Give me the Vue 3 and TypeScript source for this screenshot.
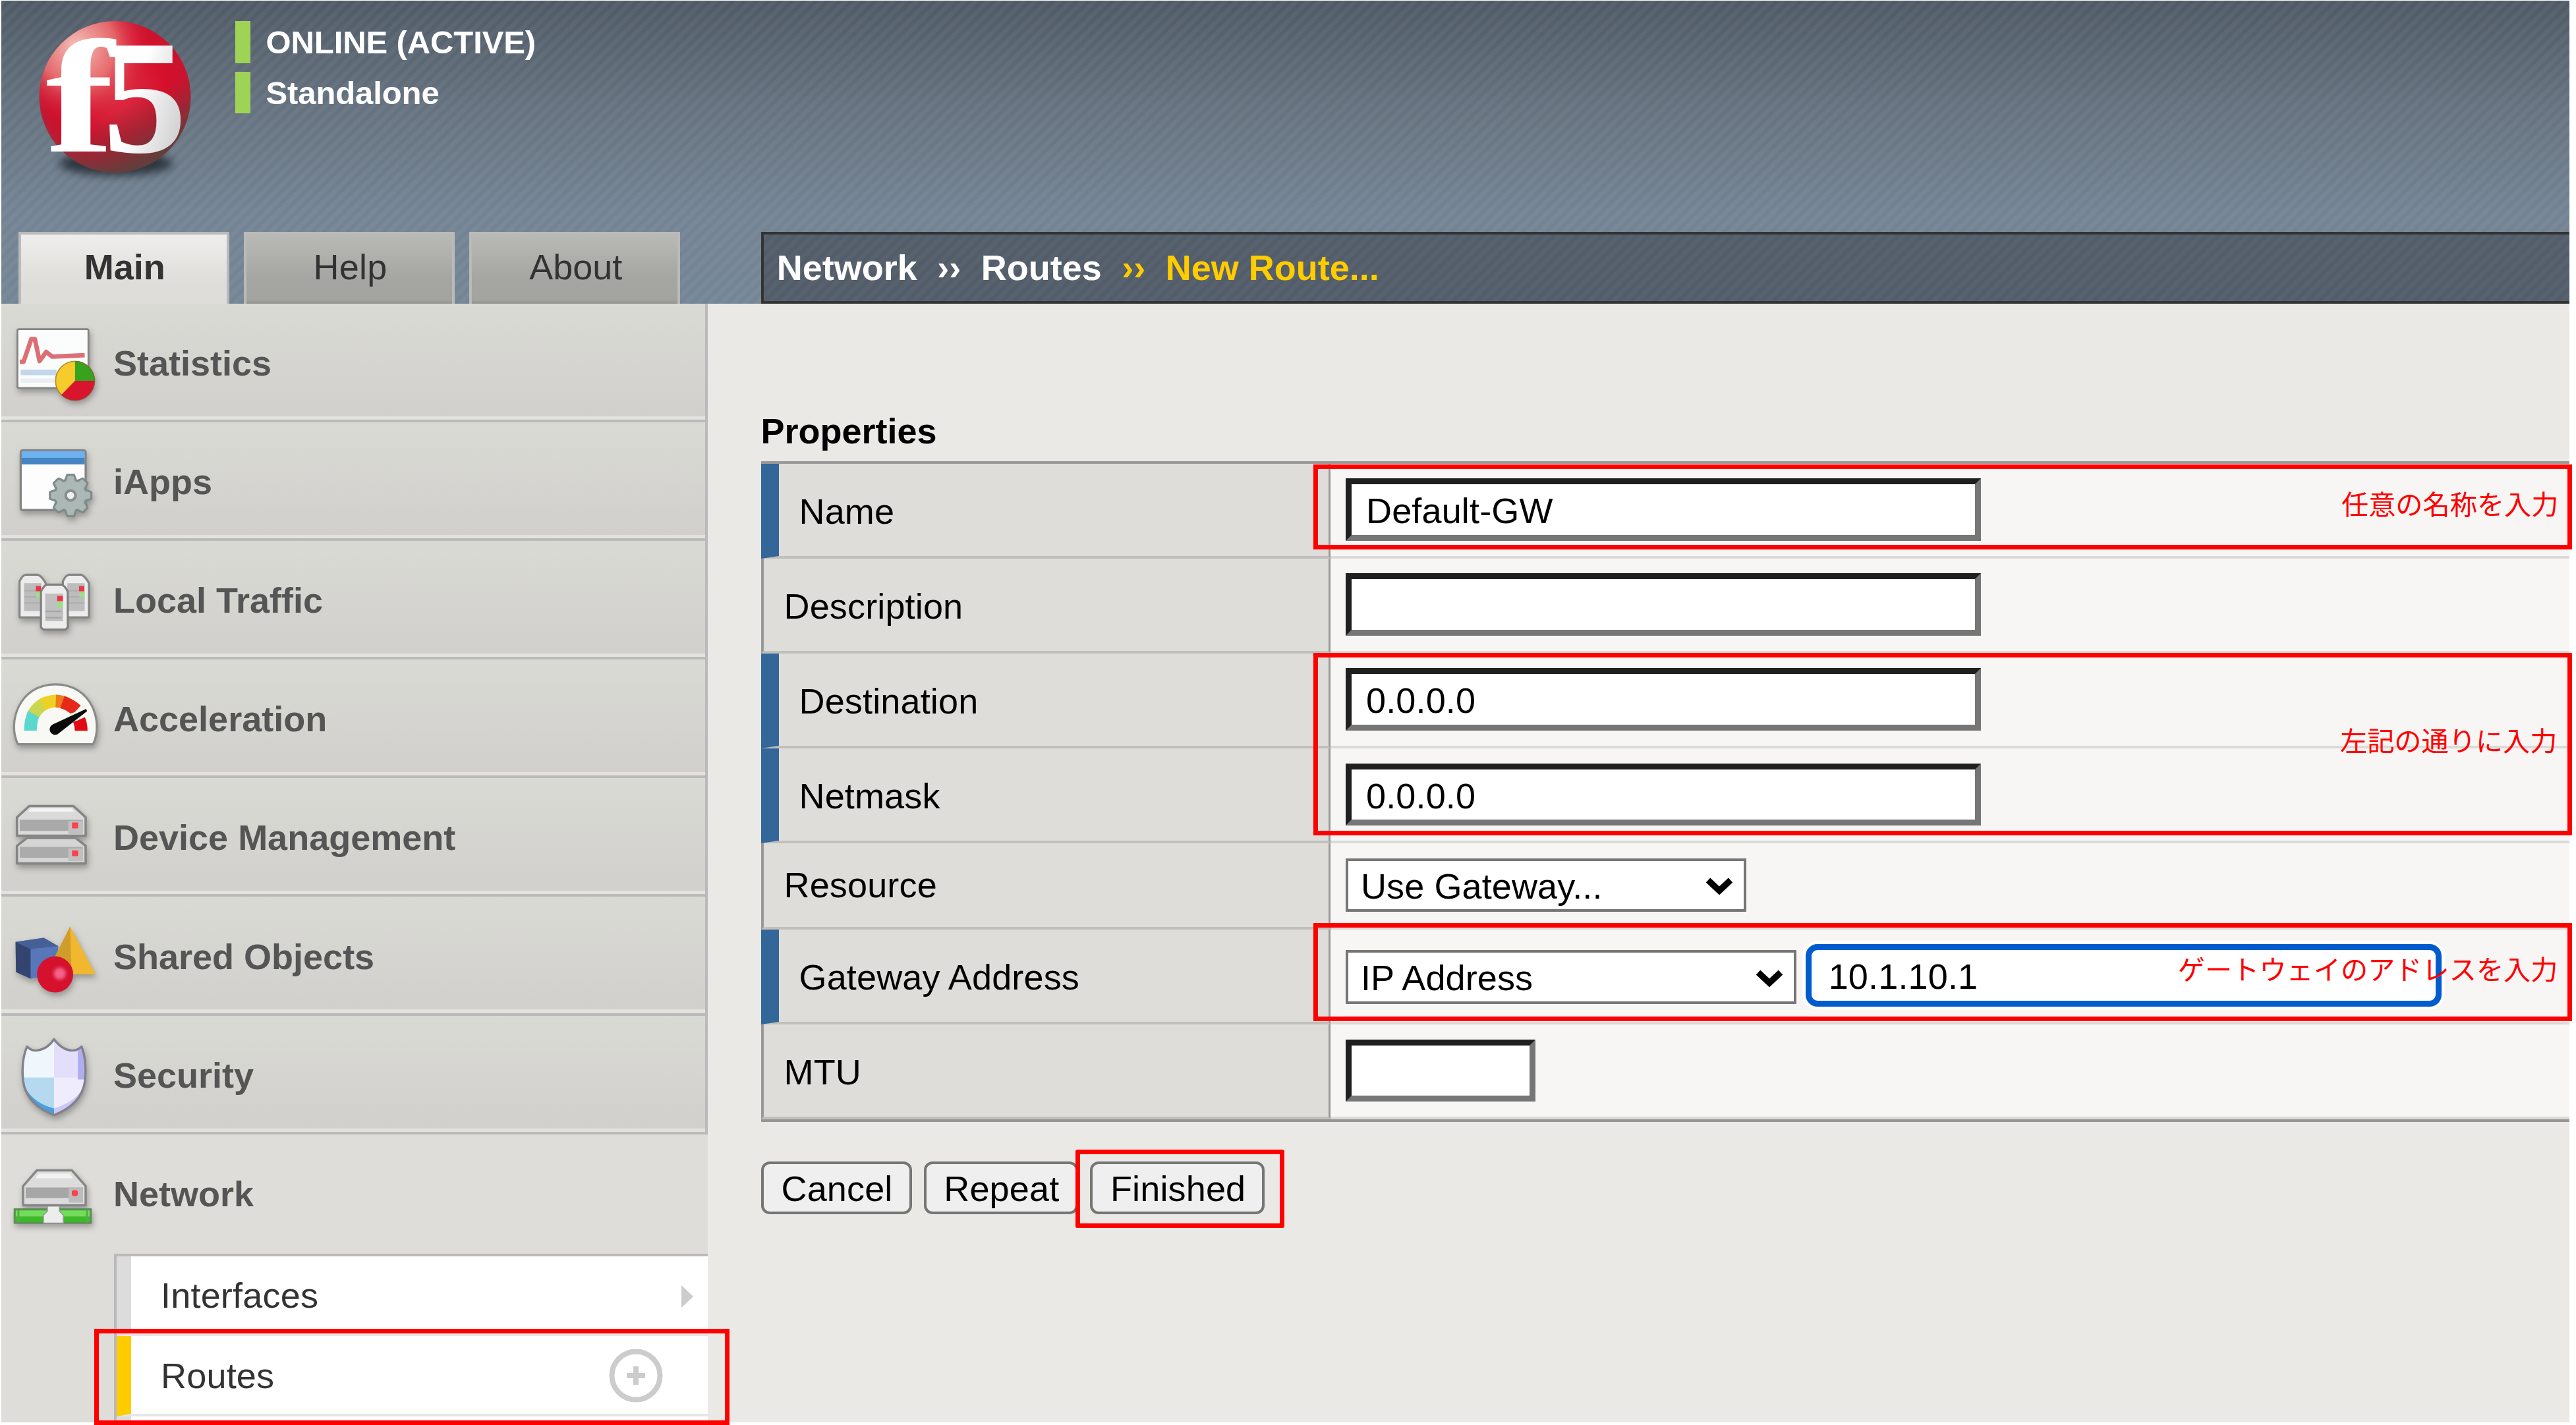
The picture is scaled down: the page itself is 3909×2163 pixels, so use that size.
<script setup lang="ts">
interface NavItem {
  label: string
  icon: string
  viewBox: string
}

interface FieldRow {
  label: string
  required: boolean
  kind: 'text' | 'select' | 'gateway' | 'short'
  value: string
}

const navItems: NavItem[] = [
  { label: 'Statistics', icon: 'statistics', viewBox: '28 0 420 493' },
  { label: 'iApps', icon: 'iapps', viewBox: '28 505 420 493' },
  { label: 'Local Traffic', icon: 'traffic', viewBox: '28 1010 420 493' },
  { label: 'Acceleration', icon: 'gauge', viewBox: '28 2 420 493' },
  { label: 'Device Management', icon: 'devices', viewBox: '28 507 420 493' },
  { label: 'Shared Objects', icon: 'objects', viewBox: '28 1012 420 493' },
  { label: 'Security', icon: 'shield', viewBox: '10 41.5 150 176' },
  { label: 'Network', icon: 'network', viewBox: '10 221.6 150 176' },
]

const tabs: string[] = ['Main', 'Help', 'About']

const rows: FieldRow[] = [
  { label: 'Name', required: true, kind: 'text', value: 'Default-GW' },
  { label: 'Description', required: false, kind: 'text', value: '' },
  { label: 'Destination', required: true, kind: 'text', value: '0.0.0.0' },
  { label: 'Netmask', required: true, kind: 'text', value: '0.0.0.0' },
  { label: 'Resource', required: false, kind: 'select', value: 'Use Gateway...' },
  { label: 'Gateway Address', required: true, kind: 'gateway', value: '10.1.10.1' },
  { label: 'MTU', required: false, kind: 'short', value: '' },
]

const gearTeeth: number[] = [0, 45, 90, 135, 180, 225, 270, 315]
const sideTowers: number[] = [0, 184]
</script>

<template>
  <div class="screen">
    <div class="page">
      <header class="banner">
        <div class="brand-row">
          <svg class="logo" viewBox="50 22 250 260">
            <defs>
              <radialGradient id="ball" cx="0.5" cy="0.45" r="0.56">
                <stop offset="0" stop-color="#dc3348" />
                <stop offset="0.6" stop-color="#d60f2c" />
                <stop offset="0.85" stop-color="#c8142f" />
                <stop offset="1" stop-color="#99303c" />
              </radialGradient>
              <radialGradient id="shine" cx="0.25" cy="0.17" r="0.5">
                <stop offset="0" stop-color="#f7cfc8" stop-opacity="0.95" />
                <stop offset="0.5" stop-color="#ec8580" stop-opacity="0.75" />
                <stop offset="1" stop-color="#d60f2c" stop-opacity="0" />
              </radialGradient>
              <linearGradient id="shade" x1="0.3" y1="0.4" x2="0.6" y2="1">
                <stop offset="0.4" stop-color="#5c403c" stop-opacity="0" />
                <stop offset="1" stop-color="#5c403c" stop-opacity="0.95" />
              </linearGradient>
              <linearGradient id="glyph" x1="0" y1="0" x2="1" y2="0.6">
                <stop offset="0.5" stop-color="#ffffff" />
                <stop offset="1" stop-color="#cfcfcf" />
              </linearGradient>
            </defs>
            <ellipse class="soft" cx="176" cy="248" rx="86" ry="18" fill="#252d36" opacity="0.9" />
            <circle cx="174.5" cy="147" r="115" fill="url(#ball)" />
            <circle cx="174.5" cy="147" r="115" fill="url(#shine)" />
            <circle cx="174.5" cy="147" r="115" fill="url(#shade)" />
            <text class="logo-letter" transform="translate(69 230) scale(1.28 1)">f</text>
            <text class="logo-letter" transform="translate(156 231) scale(1.04 1)" fill="url(#glyph)">5</text>
          </svg>
          <div class="status">
            <div class="status-line">ONLINE (ACTIVE)</div>
            <div class="status-line">Standalone</div>
          </div>
        </div>
        <div class="tab-row">
          <div class="tabs">
            <div v-for="(tab, i) in tabs" :key="tab" class="tab" :class="{ active: i === 0 }">{{ tab }}</div>
          </div>
          <div class="crumbs">
            <span class="crumb">Network</span>
            <span class="sep">››</span>
            <span class="crumb">Routes</span>
            <span class="sep gold">››</span>
            <span class="crumb gold">New Route...</span>
          </div>
        </div>
      </header>

      <div class="body">
        <nav class="sidebar">
          <div v-for="item in navItems" :key="item.label" class="nav-item" :class="{ open: item.icon === 'network' }">
            <svg class="nav-icon" :viewBox="item.viewBox">
              <g v-if="item.icon === 'statistics'">
                <rect x="74" y="108" width="302" height="250" rx="6" fill="#fbfcfc" stroke="#858585" stroke-width="8" />
                <path d="M88 280H240V304H88z" fill="#c3d6ea" />
                <path d="M88 318H236V336H88z" fill="#e9eff3" />
                <path d="M84 247H100L133 150H148L168 244L196 205L222 225L360 219" fill="none" stroke="#da7076" stroke-width="19" stroke-linejoin="round" />
                <circle cx="319" cy="328" r="84" fill="#d9142f" />
                <path d="M319 328V244A84 84 0 0 1 403 328z" fill="#37a31c" />
                <path d="M319 328L260 388A84 84 0 0 1 319 244z" fill="#f6cb2c" />
                <circle cx="319" cy="328" r="83" fill="none" stroke="#7d5a20" stroke-opacity=".5" stroke-width="5" />
              </g>
              <g v-else-if="item.icon === 'iapps'">
                <rect x="88" y="624" width="276" height="254" rx="8" fill="#fdfdfe" stroke="#838383" stroke-width="9" />
                <rect x="92" y="628" width="268" height="56" fill="#4584c2" />
                <rect x="92" y="628" width="268" height="28" fill="#6fb1f0" />
                <g stroke="#7e8b8a" stroke-width="9" fill="#abb8b6" stroke-linejoin="round">
                  <path v-for="a in gearTeeth" :key="a" d="M272 764L286 728H314L328 764z" :transform="`rotate(${a} 300 816)`" />
                  <circle cx="300" cy="816" r="68" />
                </g>
                <g fill="#abb8b6">
                  <path v-for="a in gearTeeth" :key="a" d="M276 770L289 733H311L324 770z" :transform="`rotate(${a} 300 816)`" />
                </g>
                <circle cx="300" cy="816" r="21" fill="#f1f1f4" stroke="#879190" stroke-width="12" />
              </g>
              <g v-else-if="item.icon === 'traffic'">
                <g v-for="dx in sideTowers" :key="dx" :transform="`translate(${dx} 0)`">
                  <path d="M83 1335V1182Q96 1154 110 1154H162Q178 1160 194 1190V1335z" fill="#ececec" stroke="#858585" stroke-width="9" stroke-linejoin="round" />
                  <path d="M102 1190H176V1308H102z" fill="#bdbdbd" />
                  <path d="M104 1222H174M104 1248H174M104 1274H174" stroke="#adadad" stroke-width="6" />
                  <rect x="152" y="1202" width="22" height="22" fill="#ec3443" />
                  <rect x="154" y="1230" width="20" height="20" fill="#95e67d" />
                </g>
                <path d="M174 1378V1226Q188 1196 202 1196H262Q278 1202 288 1226V1378L278 1387H184z" fill="#ececec" stroke="#808080" stroke-width="9" stroke-linejoin="round" />
                <path d="M192 1234H268V1352H192z" fill="#c0c0c0" />
                <path d="M194 1310H262M194 1336H262" stroke="#a6a6a6" stroke-width="7" />
                <rect x="243" y="1244" width="24" height="22" fill="#ec3443" />
                <rect x="245" y="1272" width="22" height="20" fill="#95e67d" />
              </g>
              <g v-else-if="item.icon === 'gauge'">
                <path d="M76 362C30 270 80 108 236 108C392 108 440 270 396 362z" fill="#f8f8f5" stroke="#8b8b89" stroke-width="9" stroke-linejoin="round" />
                <g fill="none" stroke-width="54">
                  <path d="M129 305Q130 255 147 227" stroke="#5bd8cd" />
                  <path d="M143 234Q160 204 190 189" stroke="#c9d650" />
                  <path d="M180 194Q210 178 242 179" stroke="#ecd223" />
                  <path d="M237 179Q265 180 286 192" stroke="#ed7a1c" />
                  <path d="M265 183Q300 195 325 218" stroke="#e62a1a" />
                  <path d="M336 258Q345 280 345 305" stroke="#e10a12" />
                </g>
                <path d="M288 236L372 208L372 226L330 262z" fill="#f8f8f5" />
                <path d="M211 300Q212 284 225 278L366 212L370 222L252 314Q240 326 228 322Q213 316 211 300z" fill="#0b0b0b" />
              </g>
              <g v-else-if="item.icon === 'devices'">
                <path d="M72 870V795L114 762H322L364 795V870z" fill="#d5d5d5" stroke="#858585" stroke-width="10" stroke-linejoin="round" />
                <path d="M84 800H352V846H84z" fill="#ababab" />
                <path d="M72 752V674L124 626H312L364 674V752z" fill="#dadada" stroke="#858585" stroke-width="10" stroke-linejoin="round" />
                <path d="M132 636H304L316 650H118z" fill="#f3f3f3" />
                <path d="M84 684H352V732H84z" fill="#a9a9a9" />
                <path d="M290 690H352V746H290zM290 806H352V860H290z" fill="#c0c0c0" />
                <rect x="306" y="696" width="26" height="25" fill="#fb414d" />
                <rect x="306" y="815" width="26" height="24" fill="#fb414d" />
              </g>
              <g v-else-if="item.icon === 'objects'">
                <path d="M66 1202L186 1184L248 1220L236 1340L130 1358L68 1330z" fill="#5877bb" />
                <path d="M66 1202L186 1184L248 1220L130 1232z" fill="#465f97" />
                <path d="M66 1202L130 1232V1358L68 1330z" fill="#33456f" />
                <path d="M298 1136L406 1340H196z" fill="#f0b72f" />
                <path d="M298 1136L304 1340H196z" fill="#cf9d2a" />
                <circle cx="234" cy="1340" r="77" fill="#d5112d" />
                <circle class="glow" cx="254" cy="1336" r="26" fill="#f4628c" />
              </g>
              <g v-else-if="item.icon === 'shield'">
                <clipPath id="shieldclip">
                  <path d="M82 77Q94 93 108 94Q116 95 124 88Q132 110 129 140Q124 176 82 192Q40 176 35 140Q32 110 41 88Q48 95 56 94Q72 92 82 77z" />
                </clipPath>
                <g clip-path="url(#shieldclip)">
                  <path d="M30 70H82V200H30z" fill="#eff7fd" />
                  <path d="M82 70H135V200H82z" fill="#e3dffa" />
                  <path d="M30 135H82V200H30z" fill="#b5daf0" />
                  <path d="M82 135H135V200H82z" fill="#efedfd" />
                  <path d="M34 140Q44 172 82 182V196H34z" fill="#4b9fdc" />
                  <path d="M118 88H134V138H118z" fill="#b1aef0" />
                  <path d="M132 138Q122 170 82 182V196H132z" fill="#cbc8f6" />
                </g>
                <path d="M82 77Q94 93 108 94Q116 95 124 88Q132 110 129 140Q124 176 82 192Q40 176 35 140Q32 110 41 88Q48 95 56 94Q72 92 82 77z" fill="none" stroke="#82828f" stroke-width="3.4" stroke-linejoin="round" />
              </g>
              <g v-else>
                <rect x="22" y="335" width="116" height="21" fill="#3fb92b" stroke="#5f8a5c" stroke-width="2.5" />
                <rect x="24" y="337" width="112" height="9" fill="#74dc5c" />
                <path d="M28 336V355M132 336V355" stroke="#5aa94c" stroke-width="3" />
                <path d="M66 356V344L72 338V330H90V338L96 344V356z" fill="#ededed" stroke="#9b9b9b" stroke-width="1.5" />
                <path d="M35 329V300L56 276H109L130 300V329z" fill="#dcdcdc" stroke="#868686" stroke-width="3.5" stroke-linejoin="round" />
                <path d="M59 281H106L111 288H53z" fill="#f2f2f2" />
                <path d="M39 302H126V318H39z" fill="#a6a6a6" />
                <path d="M104 303H126V325H104z" fill="#bcbcbc" />
                <rect x="109" y="306" width="9" height="9" rx="3" fill="#fb414d" />
              </g>
            </svg>
            <span class="nav-label">{{ item.label }}</span>
          </div>
          <div class="submenu">
            <div class="sub-item">
              <span>Interfaces</span>
              <i class="arrow"></i>
            </div>
            <div class="sub-item current">
              <span>Routes</span>
              <svg class="plus" viewBox="0 0 82 82">
                <circle cx="41" cy="41" r="36.5" />
                <path d="M41 27V55M27 41H55" />
              </svg>
            </div>
            <div class="sub-item"></div>
          </div>
        </nav>

        <main class="content">
          <h2 class="heading">Properties</h2>
          <div class="form">
            <div v-for="row in rows" :key="row.label" class="row" :class="{ required: row.required, low: row.kind === 'select' }">
              <div class="label">{{ row.label }}</div>
              <div class="value">
                <div v-if="row.kind === 'text'" class="input">{{ row.value }}</div>
                <div v-else-if="row.kind === 'short'" class="input small"></div>
                <div v-else class="select" :class="{ wide: row.kind === 'gateway' }">
                  <span>{{ row.kind === 'gateway' ? 'IP Address' : row.value }}</span>
                  <svg class="chevron" viewBox="0 0 44 30"><path d="M5 5L22 21L39 5" /></svg>
                </div>
                <div v-if="row.kind === 'gateway'" class="input focused">{{ row.value }}</div>
              </div>
            </div>
          </div>
          <div class="buttons">
            <div class="btn cancel">Cancel</div>
            <div class="btn repeat">Repeat</div>
            <div class="btn finished">Finished</div>
          </div>
        </main>
      </div>
    </div>

    <div class="mark mark-name"><span>任意の名称を入力</span></div>
    <div class="mark mark-dest"><span>左記の通りに入力</span></div>
    <div class="mark mark-gateway"><span>ゲートウェイのアドレスを入力</span></div>
    <div class="mark mark-finished"></div>
    <div class="mark mark-routes"></div>
  </div>
</template>

<style>
html,
body {
  margin: 0;
  background: #fff;
}
</style>

<style scoped>
.screen {
  position: relative;
  width: 3909px;
  height: 2163px;
  overflow: hidden;
  background: #fff;
  font-family: 'Liberation Sans', Arial, sans-serif;
  font-size: 54px;
  color: #000;
}
.screen * {
  box-sizing: border-box;
}
.page {
  display: flex;
  flex-direction: column;
  width: 3897px;
  height: 2157.5px;
  margin: 1px 0 0 2px;
  overflow: hidden;
  background: #eae9e5;
}
.banner {
  display: flex;
  flex-direction: column;
  justify-content: space-between;
  flex: none;
  height: 459.5px;
  background:
    repeating-linear-gradient(135deg, rgba(255, 255, 255, 0.045) 0, rgba(255, 255, 255, 0.045) 5px, transparent 7px, transparent 11px, rgba(255, 255, 255, 0.045) 12.73px),
    linear-gradient(#4f5a66 0, #65727f 35%, #738393 70%, #748595 100%);
}
.brand-row {
  display: flex;
  padding: 21px 0 0 48px;
}
.logo {
  width: 250px;
  height: 260px;
  overflow: visible;
}
.soft {
  filter: blur(7px);
}
.glow {
  filter: blur(8px);
}
.logo-letter {
  font-family: 'Liberation Serif', serif;
  font-weight: bold;
  font-size: 245px;
  fill: #fff;
}
.logo-letter[fill] {
  fill: url(#glyph);
}
.status {
  display: flex;
  flex-direction: column;
  gap: 13px;
  padding: 10px 0 0 56.5px;
}
.status-line {
  height: 63.5px;
  border-left: 23px solid #9fd356;
  padding-left: 24px;
  font-size: 49px;
  letter-spacing: -0.1px;
  font-weight: bold;
  line-height: 65px;
  color: #fff;
  white-space: nowrap;
}
.tab-row {
  display: flex;
  height: 108.5px;
}
.tabs {
  display: flex;
  flex: none;
  gap: 22.5px;
  width: 1152.7px;
  padding-left: 26px;
}
.tab {
  width: 319.7px;
  height: 108.5px;
  border: solid #bababa;
  border-width: 4.5px 4.5px 0;
  padding-left: 3px;
  background: linear-gradient(#b9b9b5, #a5a6a1 65%, #a3a49f 94%, #939391);
  text-align: center;
  line-height: 99px;
  color: #333;
}
.tab.active {
  background: linear-gradient(#efeeec, #deddd9 70%);
  font-weight: bold;
}
.tab:nth-child(2) {
  letter-spacing: 0.2px;
}
.crumbs {
  display: flex;
  align-items: center;
  flex: 1;
  border: 4.5px solid #333;
  border-right: 0;
  padding-left: 20px;
  background:
    repeating-linear-gradient(135deg, rgba(255, 255, 255, 0.03) 0, rgba(255, 255, 255, 0.03) 5px, transparent 7px, transparent 11px, rgba(255, 255, 255, 0.03) 12.73px),
    #525d69;
  font-weight: bold;
  line-height: 99px;
  color: #fff;
  white-space: nowrap;
}
.crumb {
  margin-top: 1px;
}
.sep {
  width: 97px;
  margin-top: 1px;
  text-align: center;
}
.gold {
  color: #fc0;
}
.body {
  display: flex;
  flex: 1;
}
.sidebar {
  width: 1071.5px;
  flex: none;
  background: #deddd9;
}
.nav-item {
  display: flex;
  align-items: center;
  height: 180.2px;
  border-right: 4.5px solid #bababa;
  border-bottom: 4.5px solid #bababa;
  background: linear-gradient(#dadad5, #d1d0cc 171px, #e3e2dd 171px);
}
.nav-item.open {
  border: 0;
  height: 181px;
  background: none;
  padding-bottom: 4px;
}
.nav-icon {
  width: 150px;
  height: 176px;
  margin-left: 8px;
  overflow: visible;
  filter: drop-shadow(2px 5px 5px rgba(0, 0, 0, 0.3));
}
.nav-label {
  margin: 4px 0 0 12px;
  font-weight: bold;
  line-height: 70px;
  color: #555;
}
.submenu {
  margin-left: 171px;
  border-top: 4.5px solid #bababa;
  border-left: 4.5px solid #bababa;
}
.sub-item {
  display: flex;
  align-items: center;
  justify-content: space-between;
  height: 121.6px;
  border-left: 22px solid #dcdcdc;
  border-bottom: 4.5px solid #e6e6e6;
  padding-left: 45px;
  background: #fff;
  color: #333;
}
.sub-item.current {
  border-left-color: #fc0;
}
.sub-item span {
  margin-top: 1px;
  line-height: 110px;
  letter-spacing: 0.2px;
}
.arrow {
  width: 0;
  height: 0;
  margin: 4px 22px 0 0;
  border: solid transparent;
  border-width: 17px 0 17px 18px;
  border-left-color: #ccc;
}
.plus {
  width: 82px;
  height: 82px;
  margin: 2px 67.5px 0 0;
  fill: none;
  stroke: #ccc;
  stroke-width: 8px;
}
.content {
  flex: 1;
  padding-left: 81px;
}
.heading {
  height: 239px;
  margin: 0;
  padding: 158px 0 0 0;
  font-size: 54px;
  line-height: 70px;
}
.form {
  border-top: 4.5px solid #999;
  border-bottom: 4.5px solid #959595;
}
.row {
  display: flex;
  height: 144.2px;
}
.row.low {
  height: 130.7px;
}
.label {
  width: 864px;
  border: solid #999;
  border-width: 0 3.5px 4px 4.5px;
  border-bottom-color: #c0bfbb;
  padding: 2px 0 0 31px;
  background: #deddd9;
  line-height: 140px;
  letter-spacing: 0.15px;
}
.low .label {
  line-height: 122px;
}
.required .label {
  border-left: 27px solid #369;
}
.value {
  display: flex;
  align-items: flex-start;
  flex: 1;
  border-bottom: 4px solid #dadad9;
  padding: 22.5px 0 0 23px;
  background: #f7f6f4;
}
.input {
  width: 964.5px;
  height: 94.5px;
  border: 9px solid;
  border-color: #1f1f1f #767676 #767676 #1f1f1f;
  padding-left: 22.5px;
  background: #fff;
  line-height: 81px;
  letter-spacing: 0.15px;
}
.input.small {
  width: 288px;
}
.input.focused {
  margin-left: 14px;
  border-color: #005ccd;
  border-radius: 18px;
  padding-left: 25.5px;
  box-shadow: 0 0 0 4.5px #fff;
}
.select {
  display: flex;
  justify-content: space-between;
  align-items: center;
  width: 608px;
  height: 81.3px;
  border: 4.5px solid #767676;
  padding: 0 15px 0 19.5px;
  background: #fff;
  line-height: 74px;
}
.select span {
  margin-top: 3px;
  letter-spacing: 0.1px;
}
.select.wide {
  width: 684.7px;
  margin-top: 8.8px;
}
.chevron {
  width: 44px;
  height: 30px;
  margin-top: 6px;
  fill: none;
  stroke: #000;
  stroke-width: 9.5px;
}
.buttons {
  display: flex;
  gap: 18.3px;
  padding-top: 59.5px;
}
.btn {
  height: 80.5px;
  border: 4.5px solid #767676;
  border-radius: 13px;
  padding-left: 2px;
  background: #efefef;
  text-align: center;
  line-height: 74px;
  letter-spacing: 0.15px;
}
.cancel {
  width: 229px;
}
.repeat {
  width: 234px;
}
.finished {
  width: 265px;
}
.mark {
  position: absolute;
  border: 7px solid #f00;
  color: #f00;
  font-family: 'Noto Sans CJK JP', sans-serif;
  font-size: 41.2px;
  line-height: 60px;
  text-align: right;
  white-space: nowrap;
}
.mark-name {
  left: 1992.5px;
  top: 705px;
  width: 1910px;
  height: 128.5px;
  padding: 21px 13px 0 0;
}
.mark-dest {
  left: 1992.5px;
  top: 991px;
  width: 1910px;
  height: 277px;
  padding: 94px 15px 0 0;
}
.mark-gateway {
  left: 1992.5px;
  top: 1401px;
  width: 1910px;
  height: 149px;
  padding: 31px 14px 0 0;
}
.mark-finished {
  left: 1632px;
  top: 1745px;
  width: 317px;
  height: 119px;
  border-radius: 3px;
}
.mark-routes {
  left: 142.5px;
  top: 2017px;
  width: 964.5px;
  height: 146px;
}
</style>
